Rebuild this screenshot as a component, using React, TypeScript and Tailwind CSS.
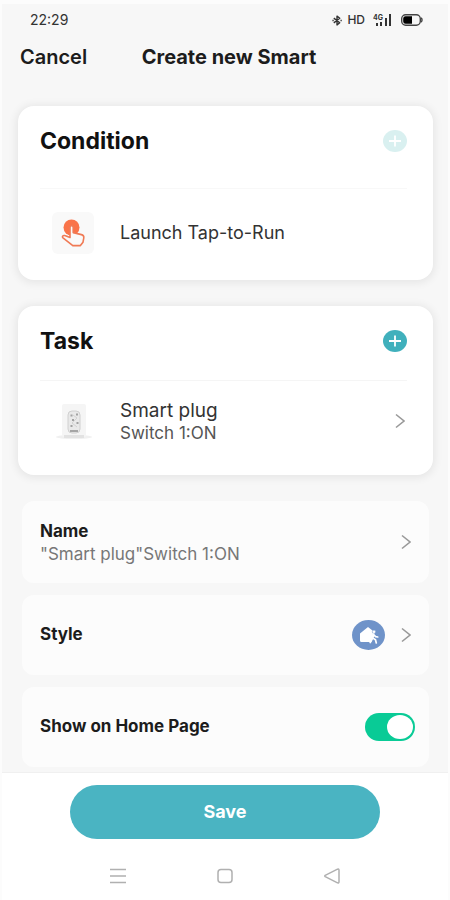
import { useState } from 'react'
import type { ReactNode } from 'react'

function BluetoothIcon() {
  return (
    <svg className="h-[11px] w-3" viewBox="0 0 12 12" fill="none" stroke="currentColor" strokeWidth={1.5}>
      <path d="M2.5 3.4 9 8.4 6 10.8V1.2l3 2.4-6.5 5" strokeLinejoin="round" />
      <path d="M1 6h1.4M9.8 6h1.4" />
    </svg>
  )
}

function SignalIcon() {
  return (
    <svg className="h-3 w-5" viewBox="0 0 20 12" fill="currentColor">
      <text x="0" y="6" fontSize="7" fontWeight="700">4G</text>
      <rect x="3" y="9" width="2" height="3" />
      <rect x="7" y="8" width="2" height="4" />
      <rect x="12" y="4" width="2" height="8" />
      <rect x="16" y="0" width="2" height="12" />
    </svg>
  )
}

function BatteryIcon() {
  return (
    <svg className="h-3 w-[22px]" viewBox="0 0 22 12" fill="none">
      <rect x="0.7" y="0.7" width="18.6" height="10.6" rx="4" stroke="#444" strokeWidth={1.4} />
      <path d="M20 4c1.4.7 1.4 3.3 0 4" stroke="#444" strokeWidth={1.4} />
      <path d="M4.5 2.2H11v7.6H4.5A2.3 2.3 0 0 1 2.2 7.5v-3a2.3 2.3 0 0 1 2.3-2.3z" fill="#000" />
    </svg>
  )
}

function TapIcon() {
  return (
    <svg className="h-7 w-6" viewBox="0 0 24 28" fill="none">
      <circle cx="10.5" cy="8.5" r="8" fill="#f9744a" />
      <path
        d="M9 8.6c0-2.4 3.2-2.4 3.2 0v5l8.2 2c1.8.4 2.6 1.4 2.4 3.2l-.8 4.4-2.6 3.4h-7.6L2 18.8c-1.4-1.2.2-2.8 1.8-2.2L9 18.4z"
        fill="#fafafa" stroke="#f07a55" strokeWidth={1.6} strokeLinejoin="round"
      />
    </svg>
  )
}

function PlugIcon() {
  return (
    <svg className="h-10 w-11" viewBox="0 0 44 40" fill="none">
      <ellipse cx="22" cy="36" rx="18" ry="2" fill="#f0f0f0" />
      <rect x="10" y="3" width="24" height="33" rx="2" fill="#f5f5f5" />
      <path d="M12 34h20v3H12z" fill="#e2e2e2" />
      <rect x="16" y="10" width="12" height="22" rx="4" fill="#e9e9e9" stroke="#d0d0d0" />
      <path d="M18.5 14.5h2M24 13.5h2M20 19h2M24.5 22h2M18.5 25h2" stroke="#a2a2a2" strokeWidth={2} />
      <path d="m21 14 4 3-5 5 5 4" stroke="#d2d2d2" />
      <path d="M18 30h8" stroke="#a5a5a5" strokeWidth={2} />
    </svg>
  )
}

function HomeIcon() {
  return (
    <svg className="h-[18px] w-5" viewBox="0 0 20 18" fill="#fff">
      <path d="M1 7.5 9 1l7 5.5L13.5 9l-1 7h-10A1.5 1.5 0 0 1 1 14.5z" />
      <circle cx="15" cy="5.8" r="1.7" stroke="#6f93c9" strokeWidth={0.5} />
      <path
        d="M14.8 8.2 13.8 12l-2.6 4.5M13.8 12l2.7 1.7.8 3.3M12 11l2.5-2.3 2.2 2 2 .3"
        fill="none" stroke="#fff" strokeWidth={1.7} strokeLinecap="round"
      />
    </svg>
  )
}

function Chevron() {
  return (
    <svg className="h-4 w-[10px] shrink-0" viewBox="0 0 10 16" fill="none" stroke="#999" strokeWidth={1.6}>
      <path d="m1 1.5 8 6.5-8 6.5" />
    </svg>
  )
}

function AddButton({ label, disabled }: { label: string; disabled?: boolean }) {
  return (
    <button
      type="button"
      aria-label={label}
      disabled={disabled}
      className="flex h-[22px] w-6 items-center justify-center rounded-[50%] bg-[#40b0bc] text-white disabled:bg-[#d9f0f0]"
    >
      <svg className="h-3 w-3" viewBox="0 0 12 12" stroke="currentColor" strokeWidth={1.8}>
        <path d="M6 0.5v11M0 6h12" />
      </svg>
    </button>
  )
}

function Card({ title, action, children }: { title: string; action: ReactNode; children: ReactNode }) {
  return (
    <section className="rounded-2xl bg-white pr-[26px] pl-[22px] shadow-[0_1px_8px_2px_rgba(0,0,0,0.07)]">
      <div className="flex h-[70px] items-center justify-between">
        <h2 className="text-[23px] font-bold text-[#111]">{title}</h2>
        {action}
      </div>
      {children}
    </section>
  )
}

export default function App() {
  const [showOnHome, setShowOnHome] = useState(true)

  return (
    <div className="flex min-h-screen flex-col border-x-2 border-t-4 border-[#fcfcfc] bg-[#f7f7f7] font-['Inter',sans-serif] text-[#1c1c1c]">
      {/* Status bar */}
      <div className="flex h-8 items-center justify-between pr-[25px] pl-7 text-[#333]">
        <span className="text-sm">22:29</span>
        <div className="flex items-center">
          <BluetoothIcon />
          <span className="ml-1 text-xs font-medium">HD</span>
          <span className="ml-2"><SignalIcon /></span>
          <span className="ml-2"><BatteryIcon /></span>
        </div>
      </div>

      {/* Header */}
      <header className="grid h-[42px] grid-cols-[1fr_auto_1fr] items-center pr-[10px] pl-[18px]">
        <button type="button" className="justify-self-start text-xl font-semibold">Cancel</button>
        <h1 className="text-xl font-bold">Create new Smart</h1>
      </header>

      <main className="flex flex-1 flex-col pt-7 pr-[15px] pb-[5px] pl-4">
        <Card title="Condition" action={<AddButton label="Add condition" disabled />}>
          <div className="mt-3 flex h-[92px] items-center border-t border-[#f8f8f8] pb-1 pl-3">
            <span className="flex h-[42px] w-[42px] items-center justify-center rounded-md bg-[#f9f9f9]">
              <TapIcon />
            </span>
            <p className="ml-[26px] text-lg text-[#333]">Launch Tap-to-Run</p>
          </div>
        </Card>

        <div className="mt-[26px]">
          <Card title="Task" action={<AddButton label="Add task" />}>
            <button
              type="button"
              className="mt-1 flex h-[95px] w-full items-center border-t border-[#f5f5f5] pr-[2px] pb-[14px] pl-3 text-left"
            >
              <PlugIcon />
              <span className="ml-6 flex-1">
                <span className="block text-[19px] leading-6 text-[#333]">Smart plug</span>
                <span className="block text-[17px] leading-5 text-[#555]">Switch 1:ON</span>
              </span>
              <Chevron />
            </button>
          </Card>
        </div>

        {/* Settings */}
        <div className="mx-1 mt-[26px] flex flex-col gap-3">
          <button type="button" className="flex h-[82px] items-center rounded-xl bg-[#fcfcfc] px-[18px] text-left">
            <span className="flex-1">
              <span className="block text-[17px] leading-6 font-bold">Name</span>
              <span className="block text-[17px] leading-[22px] text-[#777]">"Smart plug"Switch 1:ON</span>
            </span>
            <Chevron />
          </button>
          <button type="button" className="flex h-20 items-center rounded-xl bg-[#fcfcfc] px-[18px] text-left">
            <span className="flex-1 text-[17px] font-bold">Style</span>
            <span className="mr-4 flex h-[30px] w-[33px] items-center justify-center rounded-[50%] bg-[#6f93c9]">
              <HomeIcon />
            </span>
            <Chevron />
          </button>
          <label className="flex h-20 items-center justify-between rounded-xl bg-[#fcfcfc] pr-[14px] pl-[18px]">
            <span className="text-[17px] font-bold">Show on Home Page</span>
            <input
              type="checkbox"
              role="switch"
              checked={showOnHome}
              onChange={(e) => setShowOnHome(e.target.checked)}
              className="flex h-7 w-[50px] appearance-none items-center rounded-full bg-gray-300 px-[2px] before:h-6 before:w-[26px] before:rounded-[50%] before:bg-white checked:justify-end checked:bg-[#09cb96]"
            />
          </label>
        </div>
      </main>

      <footer className="border-t border-[#f0f0f0] bg-white px-[68px] pt-3">
        <button type="button" className="h-[54px] w-full rounded-full bg-[#4ab4c2] text-lg font-bold text-white">Save</button>
        <nav className="flex h-[61px] items-center justify-between px-10 pt-3 text-[#b0b0b0]">
          <button type="button" aria-label="Recent apps">
            <svg className="h-4 w-4" viewBox="0 0 16 16" stroke="currentColor" strokeWidth={1.5}>
              <path d="M0 1.5h16M0 8h16M0 14.5h16" />
            </svg>
          </button>
          <button type="button" aria-label="Home">
            <svg className="h-4 w-4" viewBox="0 0 16 16" fill="none" stroke="currentColor" strokeWidth={1.5}>
              <rect x="1" y="1.5" width="14" height="13" rx="3" />
            </svg>
          </button>
          <button type="button" aria-label="Back">
            <svg className="h-4 w-4" viewBox="0 0 16 16" fill="none" stroke="currentColor" strokeWidth={1.5} strokeLinejoin="round">
              <path d="M1.2 7.3 13.5 1.2q1.5-.5 1.5 1v11.6q0 1.5-1.5 1L1.2 8.7q-.8-.7 0-1.4z" />
            </svg>
          </button>
        </nav>
      </footer>
    </div>
  )
}
